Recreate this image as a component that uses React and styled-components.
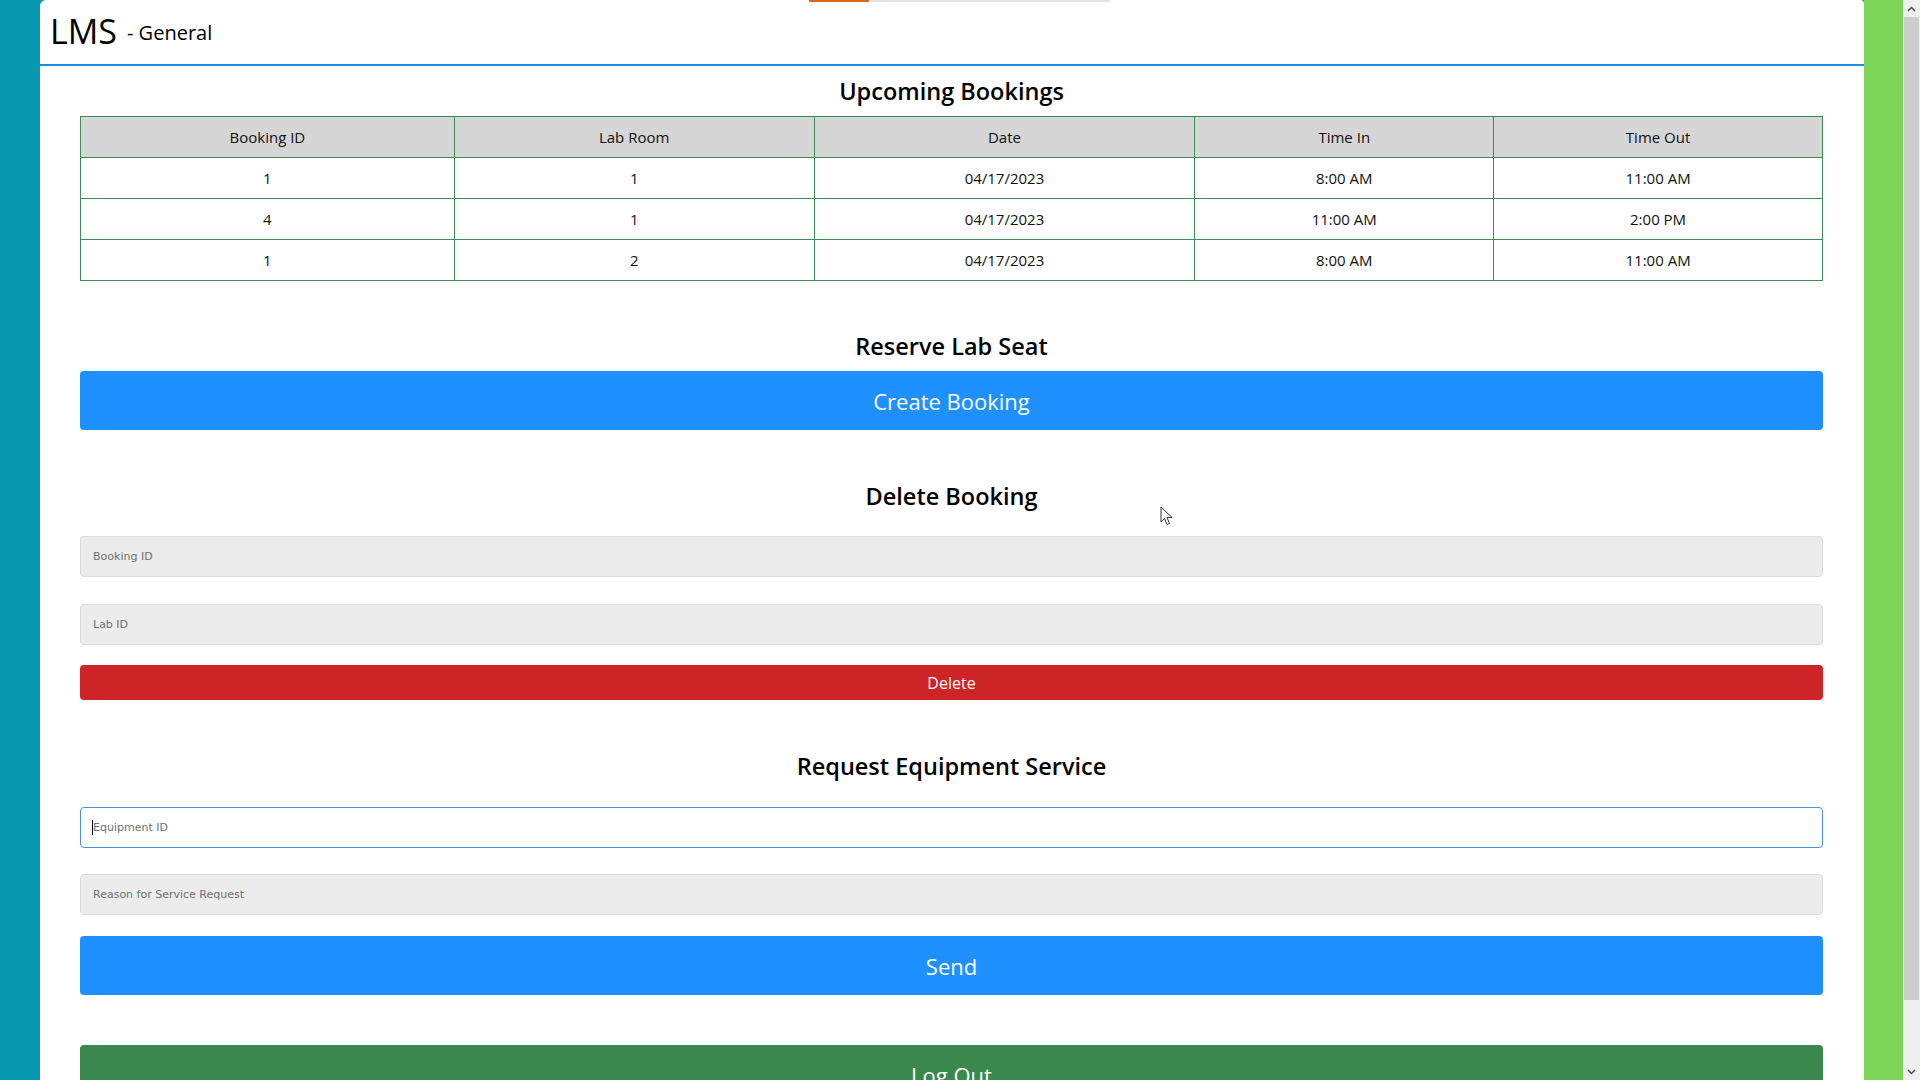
import React from "react";
import styled, { createGlobalStyle } from "styled-components";

const Global = createGlobalStyle`
  html, body { margin: 0; padding: 0; height: 100%; overflow: hidden; }
  body { font-family: "Open Sans", "Noto Sans", sans-serif; color: #111; }
  #root { height: 100%; }
  * { box-sizing: border-box; }
`;

const Frame = styled.div`
  display: flex;
  height: 100vh;
  background: #0899b1;
  position: relative;
`;

const LeftStrip = styled.div`
  width: 40px;
  flex: none;
  background: #0899b1;
`;

const Main = styled.div`
  flex: 1;
  background: #fff;
  border-top-left-radius: 6px;
  border-top-right-radius: 4px;
  overflow: hidden;
  display: flex;
  flex-direction: column;
`;

const RightStrip = styled.div`
  width: 39px;
  flex: none;
  background: #7dd85a;
`;

const Scrollbar = styled.div`
  width: 17px;
  flex: none;
  background: #f0f0f0;
  display: flex;
  flex-direction: column;
  align-items: center;
`;

const ScrollArrow = styled.div`
  height: 17px;
  width: 17px;
  display: flex;
  align-items: center;
  justify-content: center;
`;

const Thumb = styled.div`
  width: 15px;
  height: 983px;
  background: #cdcdcd;
`;

const ScrollSpace = styled.div`
  flex: 1;
`;

const Header = styled.header`
  height: 66px;
  flex: none;
  border-bottom: 2px solid #1e88e5;
  display: flex;
  align-items: center;
  padding: 0 0 2px 10px;
  gap: 10px;
`;

const Logo = styled.span`
  font-size: 34px;
  font-weight: 500;
  color: #000;
`;

const Sub = styled.span`
  font-size: 20px;
  font-weight: 500;
  color: #000;
  margin-top: 3px;
`;

const Content = styled.div`
  padding: 0 41px 0 40px;
  display: flex;
  flex-direction: column;
`;

const Title = styled.h2`
  margin: ${(p) => p.$top}px 0 ${(p) => p.$bottom}px;
  font-size: 23.5px;
  font-weight: 600;
  text-align: center;
  line-height: 30px;
  color: #000;
`;

const Table = styled.table`
  width: 100%;
  border-collapse: collapse;
  font-size: 15px;
`;

const Th = styled.th`
  background: #d6d6d6;
  border: 1px solid #3f8a57;
  height: 41px;
  font-weight: 500;
  text-align: center;
  width: ${(p) => p.$w}px;
`;

const Td = styled.td`
  border: 1px solid #3f8a57;
  height: 41px;
  text-align: center;
  font-weight: 400;
`;

const BigButton = styled.button`
  display: block;
  width: 100%;
  height: ${(p) => p.$h}px;
  border: none;
  border-radius: 4px;
  background: ${(p) => p.$bg};
  color: #fff;
  font-family: "Open Sans", "Noto Sans", sans-serif;
  font-size: ${(p) => p.$fs}px;
  font-weight: 400;
  margin-bottom: ${(p) => p.$mb || 0}px;
  cursor: pointer;
`;

const Input = styled.input`
  display: block;
  width: 100%;
  height: 41px;
  border-radius: 4px;
  border: 1px solid ${(p) => (p.$focus ? "#4a8fdc" : "#dcdcdc")};
  background: ${(p) => (p.$focus ? "#fff" : "#ececec")};
  padding: 0 12px;
  font-family: "DejaVu Sans", Tahoma, sans-serif;
  font-size: 11px;
  margin-bottom: ${(p) => p.$mb}px;
  outline: none;
  &::placeholder { color: #707070; }
`;

const FocusWrap = styled.div`
  position: relative;
`;

const Caret = styled.span`
  position: absolute;
  left: 12px;
  top: 13px;
  width: 1px;
  height: 15px;
  background: #000;
`;

const TopBar = styled.div`
  position: absolute;
  top: 0;
  left: 809px;
  width: 301px;
  height: 2px;
  background: #e1e3e4;
`;

const TopBarFill = styled.div`
  width: 60px;
  height: 100%;
  background: #d9661f;
`;

const Pointer = styled.svg`
  position: absolute;
  left: 1160px;
  top: 506px;
`;

const rows = [
  ["1", "1", "04/17/2023", "8:00 AM", "11:00 AM"],
  ["4", "1", "04/17/2023", "11:00 AM", "2:00 PM"],
  ["1", "2", "04/17/2023", "8:00 AM", "11:00 AM"],
];

const cols = [
  ["Booking ID", 374],
  ["Lab Room", 360],
  ["Date", 381],
  ["Time In", 299],
  ["Time Out", 329],
];

export default function App() {
  return (
    <>
      <Global />
      <Frame>
        <LeftStrip />
        <Main>
          <Header>
            <Logo>LMS</Logo>
            <Sub>- General</Sub>
          </Header>
          <Content>
            <Title $top={10} $bottom={10}>Upcoming Bookings</Title>
            <Table>
              <thead>
                <tr>
                  {cols.map(([c, w]) => (
                    <Th key={c} $w={w}>{c}</Th>
                  ))}
                </tr>
              </thead>
              <tbody>
                {rows.map((r, i) => (
                  <tr key={i}>
                    {r.map((v, j) => (
                      <Td key={j}>{v}</Td>
                    ))}
                  </tr>
                ))}
              </tbody>
            </Table>
            <Title $top={50} $bottom={10}>Reserve Lab Seat</Title>
            <BigButton $h={59} $bg="#1e90ff" $fs={22}>Create Booking</BigButton>
            <Title $top={51} $bottom={25}>Delete Booking</Title>
            <Input placeholder="Booking ID" $mb={27} />
            <Input placeholder="Lab ID" $mb={20} />
            <BigButton $h={35} $bg="#cc2427" $fs={16}>Delete</BigButton>
            <Title $top={51} $bottom={26}>Request Equipment Service</Title>
            <FocusWrap>
              <Input placeholder="Equipment ID" $focus $mb={26} />
              <Caret />
            </FocusWrap>
            <Input placeholder="Reason for Service Request" $mb={21} />
            <BigButton $h={59} $bg="#1e90ff" $fs={22} $mb={50}>Send</BigButton>
            <BigButton $h={59} $bg="#3a884d" $fs={22}>Log Out</BigButton>
          </Content>
        </Main>
        <RightStrip />
        <Scrollbar>
          <ScrollArrow>
            <svg width="9" height="6" viewBox="0 0 9 6">
              <path d="M1 5 L4.5 1.5 L8 5" fill="none" stroke="#505050" strokeWidth="1.5" />
            </svg>
          </ScrollArrow>
          <Thumb />
          <ScrollSpace />
          <ScrollArrow>
            <svg width="9" height="6" viewBox="0 0 9 6">
              <path d="M1 1 L4.5 4.5 L8 1" fill="none" stroke="#505050" strokeWidth="1.5" />
            </svg>
          </ScrollArrow>
        </Scrollbar>
        <TopBar>
          <TopBarFill />
        </TopBar>
        <Pointer width="14" height="21" viewBox="0 0 14 21">
          <path d="M1 1 L1 16 L4.5 12.5 L7 18.5 L9.5 17.5 L7 11.5 L12 11.5 Z" fill="#fff" stroke="#333" strokeWidth="1" />
        </Pointer>
      </Frame>
    </>
  );
}
